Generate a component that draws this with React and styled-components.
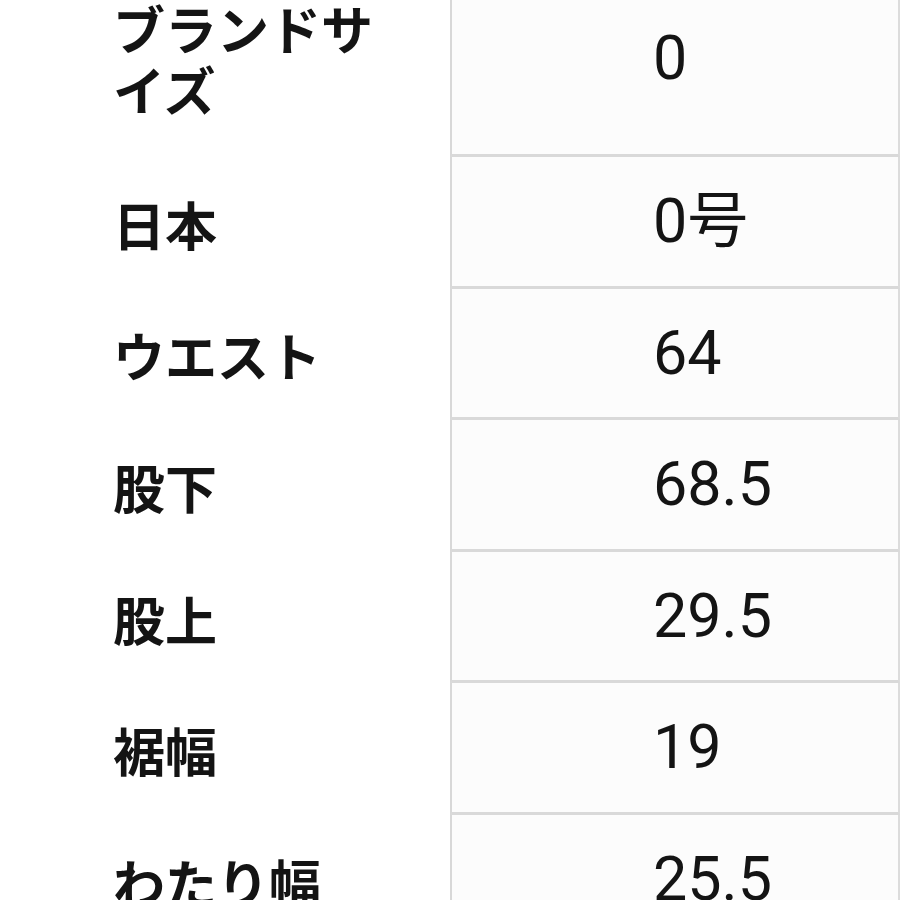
import React from "react";
import styled, { createGlobalStyle } from "styled-components";

const GlobalStyle = createGlobalStyle`
  html, body {
    margin: 0;
    padding: 0;
    background: #ffffff;
    overflow: hidden;
  }
  body {
    font-family: "Noto Sans CJK JP", "Noto Sans", sans-serif;
    color: #141414;
  }
`;

const Table = styled.div`
  width: 900px;
  margin-top: -37px;
  display: grid;
  grid-template-columns: 450px 450px;
`;

const Label = styled.div`
  display: flex;
  align-items: center;
  box-sizing: border-box;
  padding: 34px 60px ${(p) => (p.$tall ? "38px" : "33px")} 113px;
  font-size: 52px;
  font-weight: 700;
  line-height: 61px;
`;

const Value = styled.div`
  display: flex;
  align-items: center;
  box-sizing: border-box;
  padding: 34px 0 33.6px 201px;
  background: #fcfcfc;
  border-left: 2px solid #d8d8d8;
  border-right: 2px solid #dcdcdc;
  border-bottom: 3px solid #d9d9d9;
  font-family: Roboto, "Noto Sans CJK JP", sans-serif;
  font-size: 61px;
  font-weight: 400;
  line-height: 61px;
`;

const rows = [
  ["ブランドサイズ", "0"],
  ["日本", "0号"],
  ["ウエスト", "64"],
  ["股下", "68.5"],
  ["股上", "29.5"],
  ["裾幅", "19"],
  ["わたり幅", "25.5"],
];

export default function App() {
  return (
    <>
      <GlobalStyle />
      <Table>
        {rows.map(([k, v], i) => (
          <React.Fragment key={k}>
            <Label $tall={i === 0}>{k}</Label>
            <Value>{v}</Value>
          </React.Fragment>
        ))}
      </Table>
    </>
  );
}
